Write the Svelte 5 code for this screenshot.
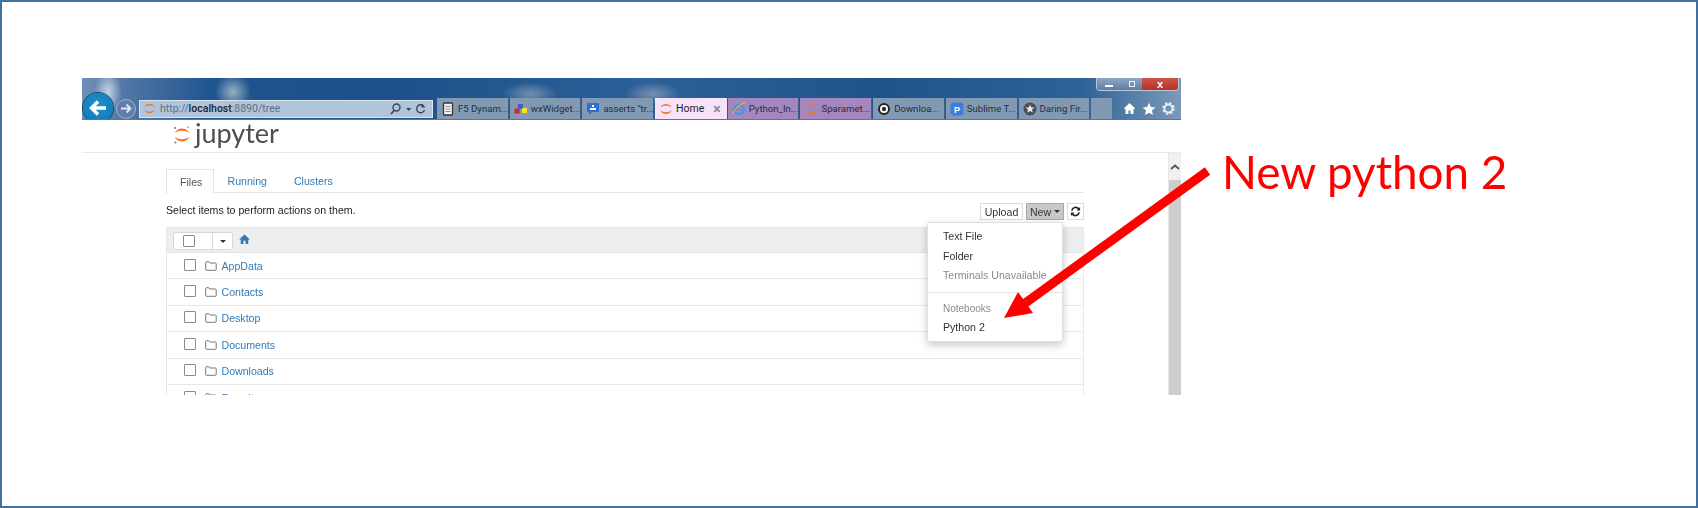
<script lang="ts">
  const tabs = [
    { label: 'F5 Dynam...', icon: 'doc' },
    { label: 'wxWidget...', icon: 'wx' },
    { label: 'asserts "tr...', icon: 'chat' },
    { label: 'Home', icon: 'jup', active: true },
    { label: 'Python_In...', icon: 'ie', pink: true },
    { label: 'Sparamet...', icon: 'jup', pink: true },
    { label: 'Downloa...', icon: 'ring' },
    { label: 'Sublime T...', icon: 'p' },
    { label: 'Daring Fir...', icon: 'star' },
  ];
  const folders = ['AppData', 'Contacts', 'Desktop', 'Documents', 'Downloads', 'Favorites'];
</script>

{#snippet jup(size, dots = false)}
  <svg class="jup" width={size} height={size} viewBox="0 0 16 16" aria-hidden="true">
    <path d="M1.500 6.500C3.500 .8 12.500 .8 14.500 6.500C12 3.600 4 3.600 1.500 6.500Z" fill="#f37726" />
    <path d="M1.500 9.500C3.500 15.200 12.500 15.200 14.500 9.500C12 12.400 4 12.400 1.500 9.500Z" fill="#f37726" />
    {#if dots}
      <circle cx="13.500" cy="1.200" r="0.700" fill="#777" />
      <circle cx="1.800" cy="1.800" r="0.900" fill="#777" />
      <circle cx="2.200" cy="14.600" r="0.900" fill="#777" />
    {/if}
  </svg>
{/snippet}

{#snippet tabIcon(kind)}
  {#if kind === 'jup'}
    {@render jup(14)}
  {:else}
    <svg width="14" height="14" viewBox="0 0 14 14" aria-hidden="true">
      {#if kind === 'doc'}
        <rect x="2.500" y="1" width="9" height="12" rx="1" fill="#f4f4f4" stroke="#333" stroke-width="1.300" />
        <path d="M4.500 4.500h5M4.500 7h5M4.500 9.500h5" stroke="#888" />
      {:else if kind === 'wx'}
        <rect x="0.500" y="6.500" width="5" height="5" fill="#d8232a" />
        <rect x="4" y="2" width="5" height="5" fill="#4a55c8" />
        <rect x="8" y="6" width="5" height="5" fill="#f4e422" />
      {:else if kind === 'chat'}
        <path d="M1 1h12v9H6l-3 3v-3H1Z" fill="#2f6fd8" />
        <path d="M4 6h6v2H4ZM6 3h2v2H6Z" fill="#fff" />
      {:else if kind === 'ie'}
        <circle cx="7" cy="7.500" r="4.700" fill="none" stroke="#3b9ae0" stroke-width="2.200" />
        <path d="M3 7.500h8" stroke="#3b9ae0" stroke-width="1.500" />
        <path d="M1 12C3 6 8 2 13 1" fill="none" stroke="#f0c020" stroke-width="1" />
      {:else if kind === 'ring'}
        <circle cx="7" cy="7" r="5" fill="#fff" stroke="#222" stroke-width="2" />
        <circle cx="7" cy="7" r="2.200" fill="#333" />
      {:else if kind === 'p'}
        <rect x="0.500" y="0.500" width="13" height="13" rx="3.500" fill="#3d7be0" />
        <text x="7" y="10.500" class="p-glyph">P</text>
      {:else}
        <circle cx="7" cy="7" r="6.500" fill="#4a4f57" />
        <path d="M7 2.500l1.300 3h3.200l-2.500 2 .9 3.100L7 8.900l-2.900 1.700.9-3.100-2.500-2h3.200Z" fill="#e8e8e8" />
      {/if}
    </svg>
  {/if}
{/snippet}

<div class="slide">
  <div class="shot">
    <header class="chrome">
      <div class="winbar">
        <div class="winctl">
          <span class="min"><i></i></span>
          <span class="max"><i></i></span>
          <span class="close">x</span>
        </div>
      </div>
      <div class="navrow">
        <span class="back">
          <svg width="20" height="18" viewBox="0 0 20 18" aria-hidden="true">
            <path d="M18 9H4M10 2.500L3.500 9l6.500 6.500" fill="none" stroke="#fff" stroke-width="3.400" />
          </svg>
        </span>
        <span class="fwd">
          <svg width="12" height="11" viewBox="0 0 12 11" aria-hidden="true">
            <path d="M1 5.500h9M6.500 1.500l4 4-4 4" fill="none" stroke="#dfe6ef" stroke-width="1.800" />
          </svg>
        </span>
        <div class="addr">
          {@render jup(13)}
          <span class="url">http://<b>localhost</b>:8890/tree</span>
          <svg class="addr-tools" width="38" height="14" viewBox="0 0 38 14" aria-hidden="true">
            <circle cx="6.500" cy="5.500" r="3.500" fill="none" stroke="#3c4650" stroke-width="1.400" />
            <path d="M4 8.500L1 12" stroke="#3c4650" stroke-width="1.800" />
            <path d="M16 6h5.500l-2.750 3Z" fill="#3c4650" />
            <path d="M34 4.500A4 4 0 1 0 34.500 8" fill="none" stroke="#3c4650" stroke-width="1.300" />
            <path d="M31.500 1.500v4h4Z" fill="#3c4650" />
          </svg>
        </div>
        <div class="tabs">
          {#each tabs as t}
            <div class="tab" class:active={t.active} class:pink={t.pink}>
              {@render tabIcon(t.icon)}
              <span class="tab-label">{t.label}</span>
              {#if t.active}<span class="tab-x">×</span>{/if}
            </div>
          {/each}
          <div class="tab blank"></div>
        </div>
        <div class="tools">
          <svg width="13" height="13" viewBox="0 0 13 13" aria-hidden="true">
            <path d="M6.500 1L0.500 6.800h2V12h3V8.500h2V12h3V6.800h2Z" fill="#fff" />
          </svg>
          <svg width="14" height="14" viewBox="0 0 14 14" aria-hidden="true">
            <path d="M7 .8l1.800 4.300 4.700.4-3.600 3 1.100 4.600L7 10.700l-4 2.400 1.100-4.600-3.600-3 4.700-.4Z" fill="#fff" />
          </svg>
          <svg width="13" height="13" viewBox="0 0 14 14" aria-hidden="true">
            <circle cx="7" cy="7" r="4.300" fill="none" stroke="#e8edf3" stroke-width="2" />
            <circle cx="7" cy="7" r="5.800" fill="none" stroke="#e8edf3" stroke-width="2" stroke-dasharray="2.500 2.050" />
          </svg>
        </div>
      </div>
    </header>

    <div class="jhead">
      {@render jup(18, true)}
      <span class="jname">jupyter</span>
    </div>

    <div class="body">
      <main class="main">
        <nav class="jtabs">
          <span class="jtab on">Files</span>
          <span class="jtab">Running</span>
          <span class="jtab">Clusters</span>
        </nav>
        <div class="toolbar">
          <span class="hint">Select items to perform actions on them.</span>
          <div class="btns">
            <span class="btn upload">Upload</span>
            <span class="btn new">New <i class="caret"></i></span>
            <span class="btn refresh">
              <svg width="11" height="11" viewBox="0 0 12 12" aria-hidden="true">
                <path d="M2 5A4.200 4.200 0 0 1 9.500 3.200M10 7A4.200 4.200 0 0 1 2.500 8.800" fill="none" stroke="#222" stroke-width="1.800" />
                <path d="M11 1v4H7ZM1 11V7h4Z" fill="#222" />
              </svg>
            </span>
            <div class="menu">
              <div class="item">Text File</div>
              <div class="item">Folder</div>
              <div class="item muted">Terminals Unavailable</div>
              <hr />
              <div class="item head">Notebooks</div>
              <div class="item">Python 2</div>
            </div>
          </div>
        </div>
        <section class="panel">
          <div class="phead">
            <div class="selbox">
              <span class="selcheck"><i class="check"></i></span>
              <span class="selcaret"><i class="caret"></i></span>
            </div>
            <svg class="crumb" width="11" height="10" viewBox="0 0 13 12" aria-hidden="true">
              <path d="M6.500 .5L0 6.500h2V12h3.200V8h2.600v4H11V6.500h2Z" fill="#337ab7" />
            </svg>
          </div>
          {#each folders as name}
            <div class="row">
              <i class="check"></i>
              <svg class="folder" width="12" height="10" viewBox="0 0 12 10" aria-hidden="true">
                <path d="M.7 8.600V1.400q0-.7.7-.7h2.400l1 1.300h5.500q.9 0 .9.800v5.800q0 .7-.7.7H1.400q-.7 0-.7-.7Z" fill="none" stroke="#777" stroke-width="1" />
              </svg>
              <span class="fname">{name}</span>
            </div>
          {/each}
        </section>
      </main>
      <aside class="scroll">
        <div class="scroll-up">
          <svg width="10" height="6" viewBox="0 0 10 6" aria-hidden="true">
            <path d="M1 5l4-3.500L9 5" fill="none" stroke="#555" stroke-width="1.800" />
          </svg>
        </div>
        <div class="thumb"></div>
      </aside>
    </div>
  </div>

  <svg class="arrow" width="1698" height="508" viewBox="0 0 1698 508" aria-hidden="true">
    <line x1="1207.500" y1="171" x2="1024" y2="304" stroke="#ff0000" stroke-width="9" />
    <polygon points="1004,318 1018,292 1033,313" fill="#ff0000" />
  </svg>
  <div class="callout">New python 2</div>
</div>

<style>
  :global(body) {
    margin: 0;
    background: #fff;
  }
  .slide {
    position: relative;
    width: 1698px;
    height: 508px;
    box-sizing: border-box;
    padding: 78px 0 0 82px;
    box-shadow: inset 0 0 0 2px #41719c;
    overflow: hidden;
    font-family: 'Liberation Sans', Arial, sans-serif;
  }
  .shot {
    width: 1099px;
    height: 317px;
    display: flex;
    flex-direction: column;
    filter: blur(0.3px);
    overflow: hidden;
  }
  svg {
    flex: none;
  }

  /* browser chrome */
  .chrome {
    height: 42px;
    flex: none;
    display: flex;
    flex-direction: column;
    overflow: hidden;
    box-sizing: border-box;
    border-bottom: 1px solid #5d7690;
    background:
      radial-gradient(ellipse 14px 22px at 26px 14px, rgba(225, 232, 240, 0.8), transparent),
      radial-gradient(ellipse 18px 18px at 151px 14px, rgba(200, 215, 215, 0.7), transparent),
      radial-gradient(ellipse 28px 12px at 448px 16px, rgba(150, 165, 190, 0.7), transparent),
      radial-gradient(ellipse 28px 12px at 571px 16px, rgba(150, 165, 190, 0.7), transparent),
      linear-gradient(90deg, #6f8fb5 0, #5278a6 40px, #1f5490 130px, #1b5188 300px, #2c6098 560px, #1f5389 800px, #2e6198 1000px, #7c99b8 1099px);
  }
  .winbar {
    height: 20px;
    flex: none;
    display: flex;
    justify-content: flex-end;
    padding-right: 2px;
  }
  .winctl {
    width: 83px;
    height: 13px;
    display: flex;
    box-sizing: border-box;
    border: 1px solid #b8c6d6;
    border-top: 0;
    border-radius: 0 0 4px 4px;
    overflow: hidden;
  }
  .winctl span {
    display: flex;
    align-items: center;
    justify-content: center;
    background: linear-gradient(#8ea6c0, #5d7ea4);
  }
  .winctl .min { width: 24px; }
  .winctl .min i { width: 8px; height: 2px; background: #fff; margin-top: 4px; }
  .winctl .max { width: 21px; }
  .winctl .max i { width: 4px; height: 4px; border: 1.500px solid #eef2f6; }
  .winctl .close {
    flex: 1;
    background: linear-gradient(#c9584f, #b92f28);
    color: #fff;
    font-size: 11px;
    font-weight: 700;
    line-height: 11px;
  }
  .navrow {
    height: 21px;
    flex: none;
    display: flex;
    align-items: center;
  }
  .back {
    width: 30px;
    height: 30px;
    flex: none;
    margin: 0 0 -1px 1px;
    transform: translateY(-1px);
    border-radius: 50%;
    background: radial-gradient(circle at 50% 40%, #1f91cf, #0d74b4);
    box-shadow: 0 0 0 1px #17476f;
    display: flex;
    align-items: center;
    justify-content: center;
  }
  .fwd {
    width: 20px;
    height: 20px;
    flex: none;
    margin-left: 3px;
    border-radius: 50%;
    box-sizing: border-box;
    border: 1px solid #9fb3cb;
    background: #5f7fa9;
    display: flex;
    align-items: center;
    justify-content: center;
  }
  .addr {
    width: 294px;
    height: 18px;
    flex: none;
    margin-left: 3px;
    box-sizing: border-box;
    padding: 0 4px 0 3px;
    display: flex;
    align-items: center;
    gap: 4px;
    background: #b0c4dc;
    border: 1px solid #dbe5f0;
    font-family: Roboto, sans-serif;
    font-size: 10.500px;
  }
  .url { flex: 1; color: #5e6f84; }
  .url b { color: #1c2228; font-weight: 500; }
  .tabs {
    display: flex;
    height: 100%;
    margin-left: 4px;
    gap: 1px;
  }
  .tab {
    width: 71.700px;
    box-sizing: border-box;
    padding: 0 0 0 4px;
    display: flex;
    align-items: center;
    gap: 3px;
    background: #8199b3;
    border-right: 1px solid #3f6288;
    font-family: Roboto, sans-serif;
    font-size: 9.600px;
    color: #27303a;
    white-space: nowrap;
  }
  .tab-label { flex: 1; }
  .tab.pink { background: #a587c0; }
  .tab.active { background: #f6e2f9; color: #1f1f1f; border-right: 0; font-size: 10.500px; }
  .tab-x { color: #8d8d8d; font-size: 14px; font-weight: 700; line-height: 1; padding-right: 6px; }
  .tab.blank { width: 21px; padding: 0; border-right: 0; }
  .tools {
    display: flex;
    align-items: center;
    gap: 6px;
    margin-left: 11px;
  }
  .p-glyph {
    font: 700 9px 'Liberation Sans', sans-serif;
    fill: #fff;
    text-anchor: middle;
  }

  /* jupyter page */
  .jhead {
    height: 33px;
    flex: none;
    box-sizing: border-box;
    border-bottom: 1.500px solid #e8e8e8;
    padding-left: 91px;
    display: flex;
    align-items: flex-start;
    gap: 4px;
  }
  .jhead .jup { margin-top: 6px; }
  .jname {
    font-family: 'Lato', sans-serif;
    font-size: 27px;
    line-height: 26px;
    color: #4e4e4e;
  }
  .body {
    flex: 1;
    min-height: 0;
    display: flex;
  }
  .main {
    flex: 1;
    min-width: 0;
    padding: 16px 0 0 84px;
    font-size: 10.600px;
    color: #333;
  }
  .jtabs {
    width: 918px;
    height: 24px;
    box-sizing: border-box;
    display: flex;
    border-bottom: 1.500px solid #e4e4e4;
  }
  .jtab {
    padding: 6px 13.500px 0;
    color: #337ab7;
  }
  .jtab.on {
    width: 48px;
    height: 25px;
    padding: 6px 13px 0;
    box-sizing: border-box;
    color: #555;
    background: #fff;
    border: 1.500px solid #e4e4e4;
    border-bottom: 0;
  }
  .toolbar {
    width: 918px;
    height: 34px;
    display: flex;
    justify-content: space-between;
    align-items: flex-start;
  }
  .hint { margin-top: 11px; color: #222; }
  .btns {
    position: relative;
    display: flex;
    gap: 3px;
    margin-top: 10px;
  }
  .btn {
    height: 17px;
    box-sizing: border-box;
    display: flex;
    align-items: center;
    justify-content: center;
    gap: 3px;
    border: 1px solid #dcdcdc;
    background: #fff;
  }
  .upload { width: 43px; }
  .new { width: 38px; background: #c8c8c8; border-color: #a8a8a8; }
  .refresh { width: 17px; }
  .caret {
    width: 0;
    height: 0;
    border: 3px solid transparent;
    border-top-color: #333;
    border-bottom: 0;
  }
  .menu {
    position: absolute;
    top: 19px;
    left: -53px;
    width: 136px;
    height: 120px;
    box-sizing: border-box;
    padding: 4px 0;
    background: #fff;
    border: 1px solid #e0e0e0;
    border-radius: 2px;
    box-shadow: 0 3px 8px rgba(0, 0, 0, 0.22);
    z-index: 2;
  }
  .item {
    height: 19.500px;
    line-height: 19.500px;
    padding-left: 15px;
    color: #333;
  }
  .item.muted { color: #8a8a8a; }
  .item.head { color: #8a8a8a; font-size: 10px; }
  .menu hr {
    margin: 6px 0 6px;
    border: 0;
    border-top: 1px solid #e6e6e6;
  }
  .panel {
    width: 918px;
    box-sizing: border-box;
    border: 1.500px solid #e8e8e8;
    border-bottom: 0;
  }
  .phead {
    height: 24px;
    background: #eeeeee;
    border-bottom: 1.500px solid #e2e2e2;
    display: flex;
    align-items: flex-start;
    padding-left: 6px;
  }
  .selbox {
    width: 60px;
    height: 18px;
    margin-top: 4px;
    display: flex;
    background: #fff;
    border: 1px solid #d8d8d8;
    border-radius: 2px;
    box-sizing: border-box;
  }
  .selcheck {
    width: 39px;
    display: flex;
    align-items: center;
    padding-left: 9px;
    box-sizing: border-box;
    border-right: 1px solid #d8d8d8;
  }
  .selcaret {
    flex: 1;
    display: flex;
    align-items: center;
    justify-content: center;
  }
  .crumb { margin: 6px 0 0 6px; }
  .check {
    width: 10px;
    height: 10px;
    flex: none;
    display: block;
    background: #fff;
    border: 1px solid #8a8a8a;
    border-radius: 1px;
  }
  .row {
    height: 26.400px;
    box-sizing: border-box;
    border-bottom: 1.500px solid #e8e8e8;
    display: flex;
    align-items: center;
    padding-left: 16.500px;
  }
  .row .check { margin-top: -2px; }
  .folder { margin-left: 9px; }
  .fname { margin-left: 5px; color: #337ab7; }
  .scroll {
    width: 13px;
    flex: none;
    display: flex;
    flex-direction: column;
    border-left: 1px solid #e6e6e6;
    box-sizing: border-box;
  }
  .scroll-up {
    height: 27px;
    flex: none;
    background: #f0f0f0;
    display: flex;
    align-items: center;
    justify-content: center;
  }
  .thumb {
    flex: 1;
    background: #cdcdcd;
  }

  /* slide annotation */
  .arrow {
    position: absolute;
    top: 0;
    left: 0;
    pointer-events: none;
  }
  .callout {
    position: absolute;
    left: 1222px;
    top: 142px;
    font-family: 'Lato', sans-serif;
    font-size: 45.800px;
    line-height: 60px;
    color: #ff0000;
    white-space: nowrap;
  }
</style>
